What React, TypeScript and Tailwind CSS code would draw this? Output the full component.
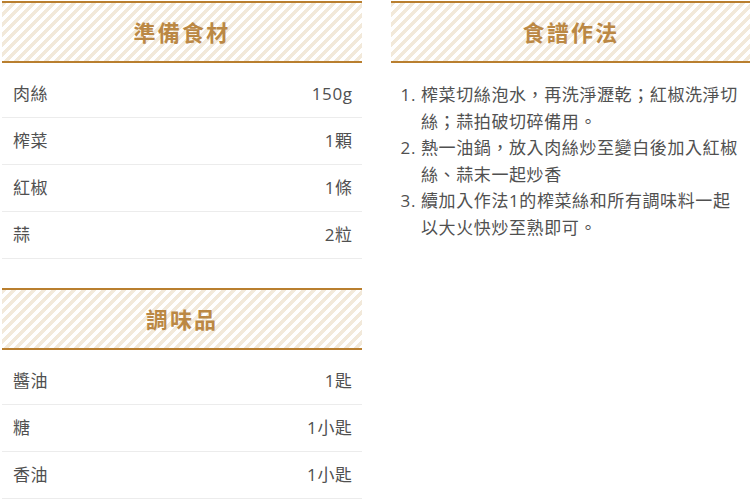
import React from 'react';

const ingredients = [
  { name: '肉絲', amount: '150g' },
  { name: '榨菜', amount: '1顆' },
  { name: '紅椒', amount: '1條' },
  { name: '蒜', amount: '2粒' },
];

const seasonings = [
  { name: '醬油', amount: '1匙' },
  { name: '糖', amount: '1小匙' },
  { name: '香油', amount: '1小匙' },
];

const steps = [
  '榨菜切絲泡水，再洗淨瀝乾；紅椒洗淨切絲；蒜拍破切碎備用。',
  '熱一油鍋，放入肉絲炒至變白後加入紅椒絲、蒜末一起炒香',
  '續加入作法1的榨菜絲和所有調味料一起以大火快炒至熟即可。',
];

const SectionTitle = ({ title }: { title: string }) => (
  <div className="h-[62px] border-y-2 border-[#b97f2f] bg-[repeating-linear-gradient(135deg,#f2e9da_0px,#f2e9da_3.5px,#ffffff_3.5px,#ffffff_7.07px)] flex items-center justify-center">
    <h2 className="text-[22px] font-bold tracking-[0.1em] text-[#bb8844] leading-none">{title}</h2>
  </div>
);

const ItemTable = ({ items }: { items: { name: string; amount: string }[] }) => (
  <ul className="mt-2">
    {items.map((item) => (
      <li
        key={item.name}
        className="h-[47px] border-b border-[#ececec] flex items-center justify-between pl-[11px] pr-[10px] text-[17px] tracking-[0.6px] text-[#505050]"
      >
        <span>{item.name}</span>
        <span className="-mr-[0.6px]">{item.amount}</span>
      </li>
    ))}
  </ul>
);

const App = () => {
  return (
    <div
      lang="zh-TW"
      className="w-[750px] h-[501px] overflow-hidden bg-white pt-px pl-[2px] flex gap-[29px] font-['Open_Sans','Noto_Sans_CJK_TC',sans-serif]"
    >
      {/* LEFT: 食材 + 調味品 */}
      <div className="w-[360px] shrink-0">
        <SectionTitle title="準備食材" />
        <ItemTable items={ingredients} />

        <div className="mt-[29px]">
          <SectionTitle title="調味品" />
          <ItemTable items={seasonings} />
        </div>
      </div>

      {/* RIGHT: 作法 */}
      <div className="w-[360px] shrink-0">
        <SectionTitle title="食譜作法" />
        <ol className="list-decimal mt-[19px] pl-[30px] pr-[8px] text-[17px] leading-[26.5px] tracking-[0.6px] text-[#505050]">
          {steps.map((step, i) => (
            <li key={i}>{step}</li>
          ))}
        </ol>
      </div>
    </div>
  );
};

export default App;
